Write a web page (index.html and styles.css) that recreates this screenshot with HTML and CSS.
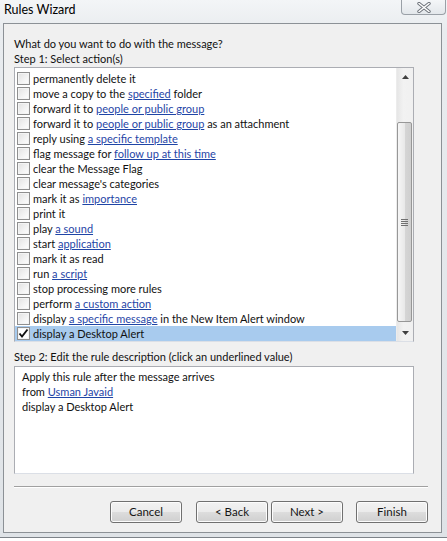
FILE: index.html
```html
<!DOCTYPE html>
<html>
<head>
<meta charset="utf-8">
<link rel="stylesheet" href="styles.css">
</head>
<body>
<div class="window">
  <div class="titlebar">
    <span class="title">Rules Wizard</span>
    <div class="close">
      <svg width="14" height="11" viewBox="0 0 14 11"><path d="M2 1.5 L12 9.5 M12 1.5 L2 9.5" stroke="#6b7078" stroke-width="3.4" stroke-linecap="round"/><path d="M2 1.5 L12 9.5 M12 1.5 L2 9.5" stroke="#ffffff" stroke-width="1.6" stroke-linecap="round"/></svg>
    </div>
  </div>
  <div class="client">
    <div class="label">What do you want to do with the message?</div>
    <div class="label">Step 1: Select action(s)</div>
    <div class="listbox">
      <div class="rows">
        <div class="row"><span class="cb"></span><span>permanently delete it</span></div>
        <div class="row"><span class="cb"></span><span>move a copy to the <a>specified</a> folder</span></div>
        <div class="row"><span class="cb"></span><span>forward it to <a>people or public group</a></span></div>
        <div class="row"><span class="cb"></span><span>forward it to <a>people or public group</a> as an attachment</span></div>
        <div class="row"><span class="cb"></span><span>reply using <a>a specific template</a></span></div>
        <div class="row"><span class="cb"></span><span>flag message for <a>follow up at this time</a></span></div>
        <div class="row"><span class="cb"></span><span>clear the Message Flag</span></div>
        <div class="row"><span class="cb"></span><span>clear message's categories</span></div>
        <div class="row"><span class="cb"></span><span>mark it as <a>importance</a></span></div>
        <div class="row"><span class="cb"></span><span>print it</span></div>
        <div class="row"><span class="cb"></span><span>play <a>a sound</a></span></div>
        <div class="row"><span class="cb"></span><span>start <a>application</a></span></div>
        <div class="row"><span class="cb"></span><span>mark it as read</span></div>
        <div class="row"><span class="cb"></span><span>run <a>a script</a></span></div>
        <div class="row"><span class="cb"></span><span>stop processing more rules</span></div>
        <div class="row"><span class="cb"></span><span>perform <a>a custom action</a></span></div>
        <div class="row"><span class="cb"></span><span>display <a>a specific message</a> in the New Item Alert window</span></div>
        <div class="row selected"><span class="cb checked"><svg width="11" height="11" viewBox="0 0 11 11"><path d="M1.5 5.5 L4 8.5 L9.5 1.5" stroke="#111" stroke-width="1.9" fill="none"/></svg></span><span>display a Desktop Alert</span></div>
      </div>
      <div class="scrollbar">
        <div class="arrow"><svg width="7" height="4" viewBox="0 0 7 4"><path d="M0 4 L3.5 0 L7 4 Z" fill="#404040"/></svg></div>
        <div class="track">
          <div class="thumb"><span class="grip"></span></div>
        </div>
        <div class="arrow"><svg width="7" height="4" viewBox="0 0 7 4"><path d="M0 0 L3.5 4 L7 0 Z" fill="#404040"/></svg></div>
      </div>
    </div>
    <div class="label step2">Step 2: Edit the rule description (click an underlined value)</div>
    <div class="desc">
      <div>Apply this rule after the message arrives</div>
      <div>from <a>Usman Javaid</a></div>
      <div>display a Desktop Alert</div>
    </div>
    <div class="separator"></div>
    <div class="buttons">
      <button class="btn">Cancel</button>
      <button class="btn back">&lt; Back</button>
      <button class="btn next">Next &gt;</button>
      <button class="btn finish">Finish</button>
    </div>
  </div>
</div>
</body>
</html>
```
FILE: styles.css
```css
html, body {
  margin: 0;
  padding: 0;
  background: #ffffff;
}
body {
  font-family: Lato, "Noto Sans", sans-serif;
  font-size: 11px;
  color: #111111;
}
.window {
  width: 447px;
  height: 538px;
  box-sizing: border-box;
  background: linear-gradient(to bottom, #f3f5f7 0, #e9ecef 30px, #dfe3e7 100%);
  border-bottom: 1px solid #7d8288;
  padding: 0 5px 4px 3px;
  display: flex;
  flex-direction: column;
}
.titlebar {
  height: 23px;
  position: relative;
  flex: none;
}
.title {
  position: absolute;
  left: 1px;
  top: 2px;
  font-size: 12.5px;
  color: #000;
  line-height: 16px;
}
.close {
  position: absolute;
  right: -4px;
  top: 0;
  width: 45px;
  height: 15px;
  box-sizing: border-box;
  border: 1px solid #9aa0a7;
  border-top: none;
  border-radius: 0 0 4px 4px;
  background: linear-gradient(to bottom, #f4f6f8, #e3e7eb);
  display: flex;
  align-items: center;
  justify-content: center;
}
.client {
  flex: 1;
  background: #f0f0f0;
  border: 1px solid #8c9196;
  padding: 12px 0 0 10px;
  display: flex;
  flex-direction: column;
  align-items: flex-start;
}
.label {
  line-height: 15px;
  height: 15px;
  white-space: nowrap;
}
a {
  color: #1f45a6;
  text-decoration: underline;
}
.listbox {
  margin-top: 1px;
  width: 400px;
  height: 275px;
  box-sizing: border-box;
  border: 1px solid #abadb3;
  border-bottom-color: #dbdfe6;
  background: #fff;
  display: flex;
}
.rows {
  flex: 1;
  padding-top: 3px;
}
.row {
  height: 15px;
  line-height: 15px;
  display: flex;
  align-items: center;
  padding-left: 2px;
  white-space: nowrap;
}
.row.selected {
  background: #a8cbee;
}
.cb {
  width: 13px;
  height: 13px;
  box-sizing: border-box;
  border: 1px solid #8f8f8f;
  background: linear-gradient(135deg, #e1e1e1 0, #f4f4f4 60%, #ffffff 100%);
  box-shadow: inset 0 0 0 1px #f4f4f4;
  margin-right: 3px;
  flex: none;
  display: flex;
  align-items: center;
  justify-content: center;
}
.cb.checked {
  background: #fff;
}
.scrollbar {
  width: 17px;
  flex: none;
  display: flex;
  flex-direction: column;
  background: linear-gradient(to right, #e6e6e6, #f2f2f2 40%, #f0f0f0);
  border-left: 1px solid #ececec;
  box-sizing: border-box;
}
.arrow {
  height: 17px;
  flex: none;
  display: flex;
  align-items: center;
  justify-content: center;
}
.track {
  flex: 1;
  padding-top: 37px;
}
.thumb {
  width: 15px;
  height: 200px;
  box-sizing: border-box;
  border: 1px solid #979797;
  border-radius: 2px;
  background: linear-gradient(to right, #f6f6f6 0, #e9e9e9 50%, #d6d6d6 51%, #cfcfcf 100%);
  display: flex;
  align-items: center;
  justify-content: center;
}
.grip {
  width: 7px;
  height: 7px;
  background: repeating-linear-gradient(to bottom, #707070 0, #707070 1px, transparent 1px, transparent 2px);
}
.step2 {
  margin-top: 7px;
}
.desc {
  margin-top: 2px;
  width: 400px;
  height: 108px;
  box-sizing: border-box;
  border: 1px solid #abadb3;
  border-bottom-color: #dbdfe6;
  background: #fff;
  padding: 2px 0 0 7px;
  line-height: 15px;
}
.separator {
  margin-top: 12px;
  width: 414px;
  height: 1px;
  background: #a0a0a0;
  border-bottom: 1px solid #ffffff;
}
.buttons {
  margin-top: 13px;
  width: 414px;
  display: flex;
  justify-content: flex-end;
}
.btn {
  width: 72px;
  height: 22px;
  box-sizing: border-box;
  border: 1px solid #707070;
  border-radius: 3px;
  background: linear-gradient(to bottom, #f2f2f2 0, #ebebeb 50%, #dddddd 51%, #cfcfcf 100%);
  box-shadow: inset 0 0 0 1px #fcfcfc;
  font-family: inherit;
  font-size: 11.5px;
  color: #151515;
  padding: 0;
  line-height: 18px;
}
.back {
  margin-left: 14px;
}
.next {
  margin-left: 3px;
}
.finish {
  margin-left: 13px;
}
```
